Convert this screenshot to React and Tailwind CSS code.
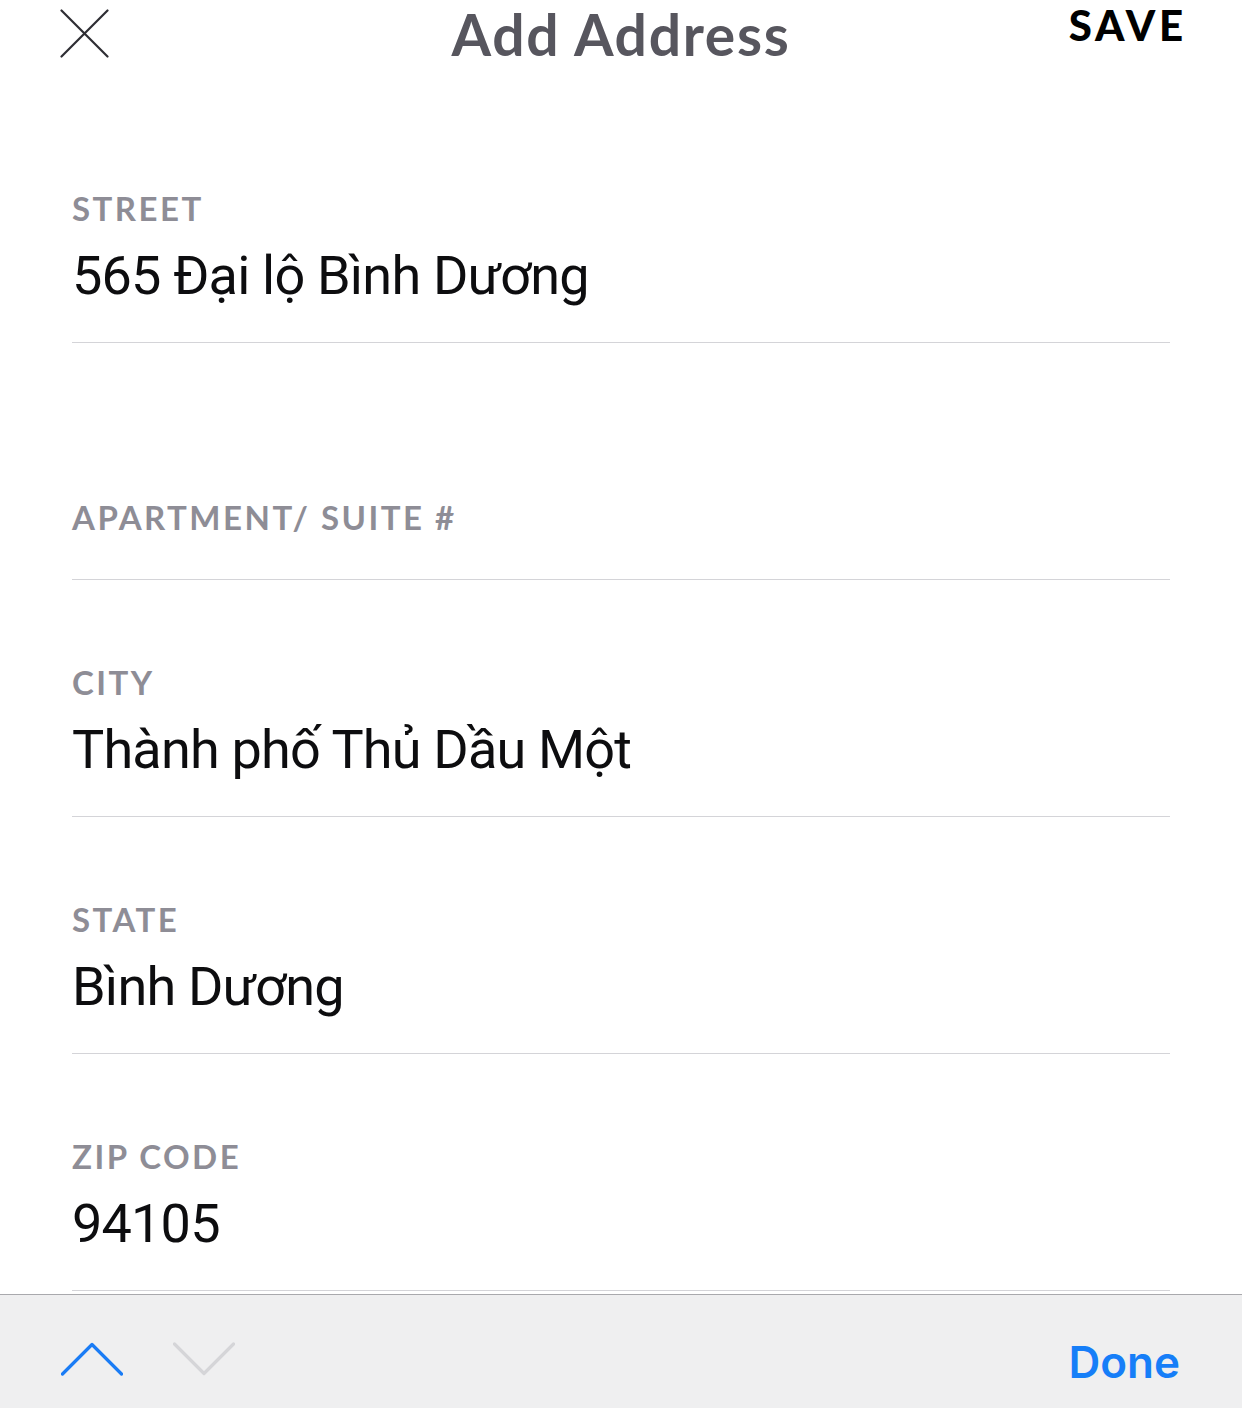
import { useState } from "react";

const fields = [
  { label: "STREET", value: "565 Đại lộ Bình Dương" },
  { label: "APARTMENT/ SUITE #", value: "" },
  { label: "CITY", value: "Thành phố Thủ Dầu Một" },
  { label: "STATE", value: "Bình Dương" },
  { label: "ZIP CODE", value: "94105" },
];

function Field({ label, value }) {
  const empty = !value;
  return (
    <div
      className={`h-[237px] border-b border-[#d4d4d8] ${empty ? "pt-[158px]" : "pt-[86px]"}`}
    >
      <div className="font-['Lato',sans-serif] font-bold text-[33px] leading-[33px] tracking-[0.075em] text-[#8e8d96]">
        {label}
      </div>
      {!empty && (
        <div className="mt-[24px] font-['Roboto',sans-serif] text-[54px] leading-[54px] tracking-[-0.015em] text-[#0d0d0f]">
          {value}
        </div>
      )}
    </div>
  );
}

export default function App() {
  const [list] = useState(fields);

  return (
    <div className="w-[1242px] h-[1408px] bg-white flex flex-col">
      {/* header */}
      <div className="h-[106px] grid grid-cols-[1fr_auto_1fr] items-start">
        <div className="pl-[60px] pt-[9px]">
          <svg width="49" height="49" viewBox="0 0 49 49" fill="none">
            <path d="M1.5 1.5L47.5 47.5M47.5 1.5L1.5 47.5" stroke="#2e2d33" strokeWidth="2.2" strokeLinecap="round" />
          </svg>
        </div>
        <h1 className="whitespace-nowrap font-['Lato',sans-serif] font-bold text-[57px] leading-[69px] tracking-[0.03em] text-[#57565e]">
          Add Address
        </h1>
        <div className="flex justify-end pr-[55px]">
          <span className="font-['Lato',sans-serif] font-black text-[42px] leading-[51px] tracking-[0.09em] text-black">
            SAVE
          </span>
        </div>
      </div>

      {/* fields */}
      <div className="mx-[72px]">
        {list.map((f) => (
          <Field key={f.label} label={f.label} value={f.value} />
        ))}
      </div>

      {/* keyboard accessory bar */}
      <div className="mt-[3px] h-[114px] border-t border-[#a9a9ad] bg-[#efeff0] flex items-start justify-between">
        <div className="flex gap-[50px] pl-[61px] pt-[47px]">
          <svg width="62" height="34" viewBox="0 0 62 34" fill="none">
            <path d="M1.5 32L31 2.5L60.5 32" stroke="#1a7cf5" strokeWidth="3.2" strokeLinecap="round" strokeLinejoin="round" />
          </svg>
          <svg width="62" height="34" viewBox="0 0 62 34" fill="none">
            <path d="M1.5 2L31 31.5L60.5 2" stroke="#d5d5d8" strokeWidth="3.2" strokeLinecap="round" strokeLinejoin="round" />
          </svg>
        </div>
        <div className="pr-[62px] pt-[45px] font-['Inter',sans-serif] font-semibold text-[44px] leading-[44px] text-[#167ef8]">
          Done
        </div>
      </div>
    </div>
  );
}
